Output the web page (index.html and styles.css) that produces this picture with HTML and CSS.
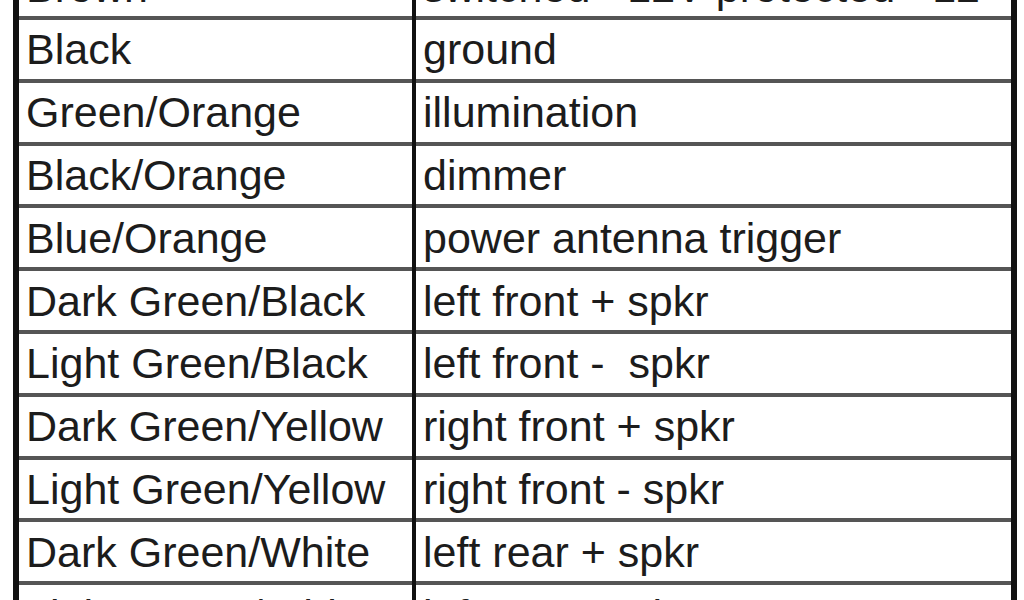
FILE: index.html
```html
<!DOCTYPE html>
<html lang="en">
<head>
<meta charset="utf-8">
<title>Wire colors</title>
<link rel="stylesheet" href="styles.css">
</head>
<body>
<div class="sheet">
  <div class="wires">
    <div class="cell">Brown</div><div class="cell">switched +12V protected +12</div>
    <div class="cell">Black</div><div class="cell">ground</div>
    <div class="cell">Green/Orange</div><div class="cell">illumination</div>
    <div class="cell">Black/Orange</div><div class="cell">dimmer</div>
    <div class="cell">Blue/Orange</div><div class="cell">power antenna trigger</div>
    <div class="cell">Dark Green/Black</div><div class="cell">left front + spkr</div>
    <div class="cell">Light Green/Black</div><div class="cell">left front -&nbsp; spkr</div>
    <div class="cell">Dark Green/Yellow</div><div class="cell">right front + spkr</div>
    <div class="cell">Light Green/Yellow</div><div class="cell">right front - spkr</div>
    <div class="cell">Dark Green/White</div><div class="cell">left rear + spkr</div>
    <div class="cell">Light Green/White</div><div class="cell">left rear - spkr</div>
  </div>
</div>
</body>
</html>
```
FILE: styles.css
```css
html, body {
  margin: 0;
  padding: 0;
  background: #ffffff;
  overflow: hidden;
}

.sheet {
  width: 1024px;
  height: 600px;
  overflow: hidden;
  padding-left: 13px;
  box-sizing: border-box;
}

.wires {
  width: 1004px;
  box-sizing: border-box;
  margin-top: -42.8px;
  display: grid;
  grid-template-columns: 393px 1fr;
  grid-auto-rows: 62.8px;
  column-gap: 4px;
  background: #111111;
  border-left: 6px solid #111111;
  border-right: 6px solid #111111;
  font-family: "Liberation Sans", Arial, sans-serif;
  font-size: 43px;
  color: #1c1c1c;
}

.cell {
  background: #ffffff;
  box-sizing: border-box;
  border-bottom: 4px solid #555555;
  padding-left: 7px;
  display: flex;
  align-items: center;
  white-space: nowrap;
  overflow: hidden;
  line-height: 1.117;
}
```
